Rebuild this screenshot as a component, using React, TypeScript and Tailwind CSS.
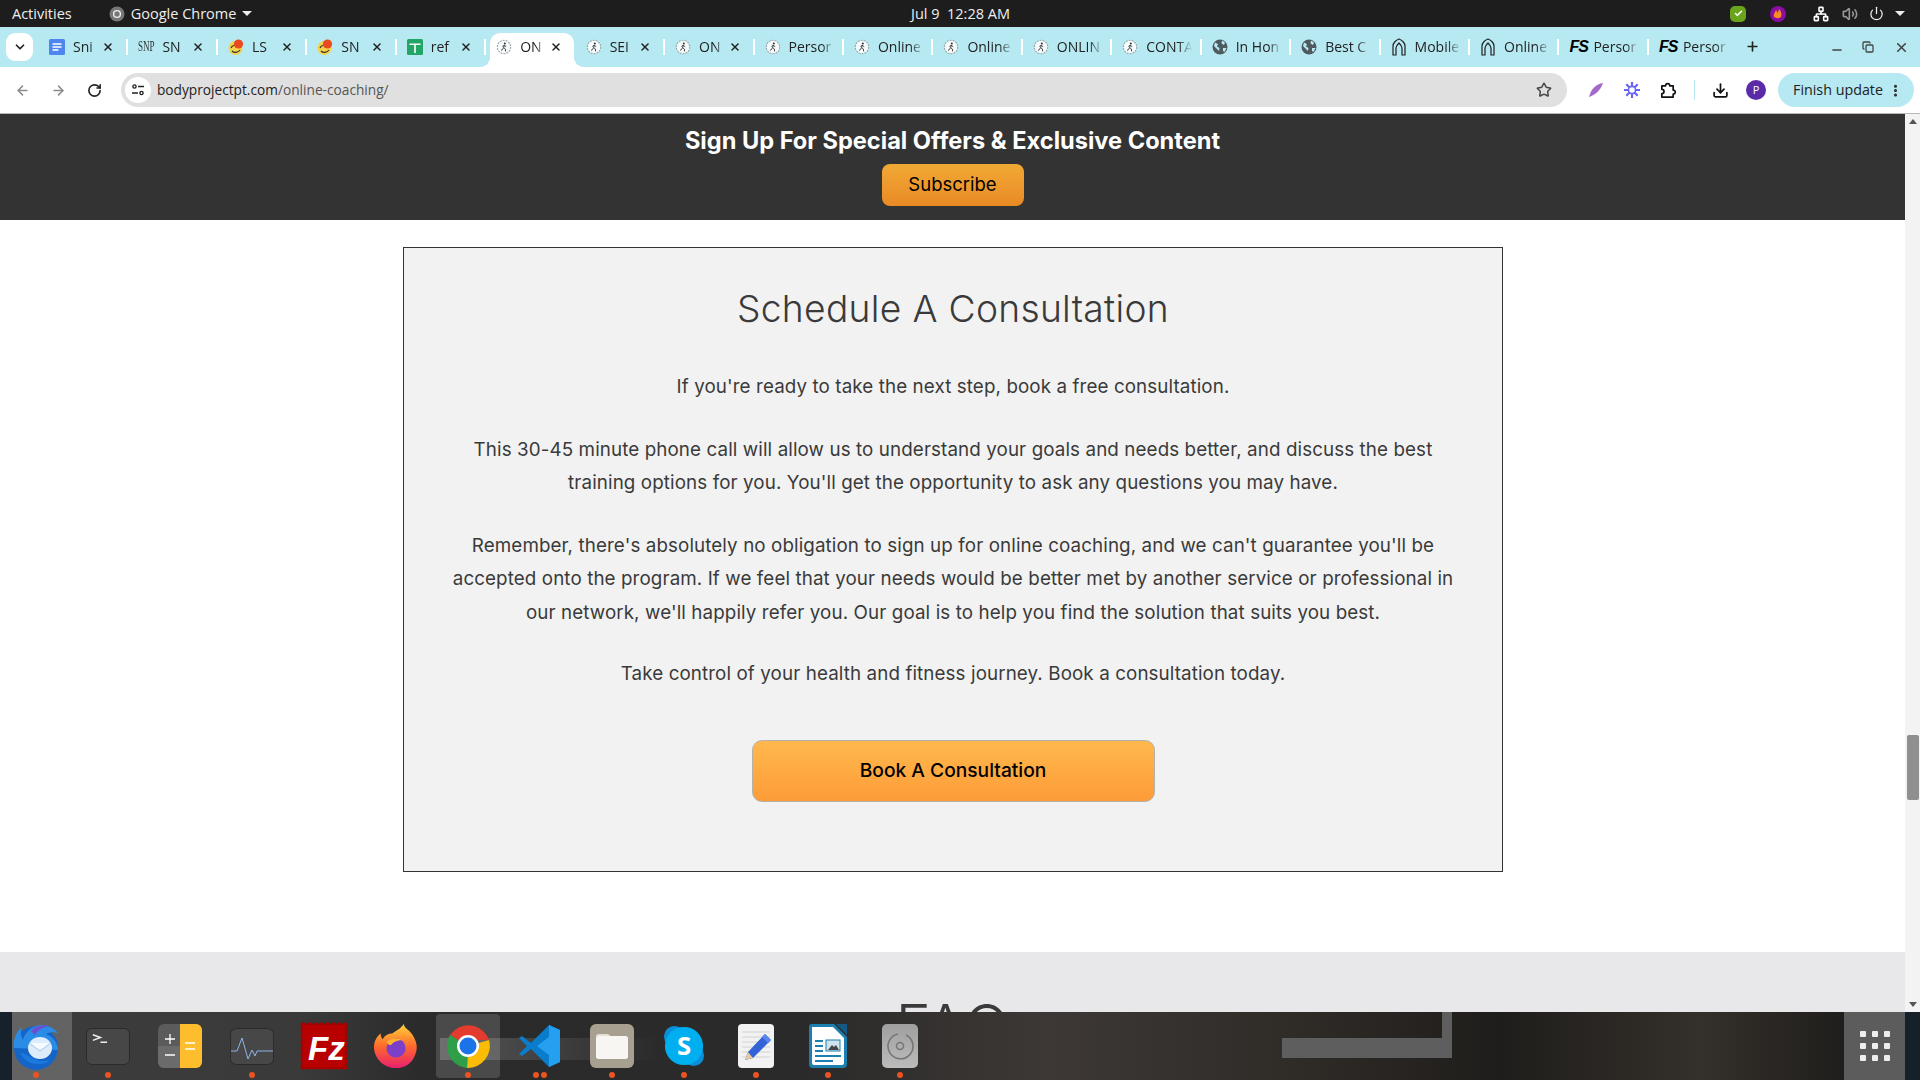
import { ChevronDown, X, Plus, Minus, ArrowLeft, ArrowRight, RotateCw, Star, Download, EllipsisVertical, Power, Copy, Check, Network, Volume2 } from "lucide-react";

type TabKind = "doc" | "snp" | "chat" | "sheet" | "runner" | "globe" | "arch" | "fs";

interface TabItem {
  kind: TabKind;
  title: string;
  close?: boolean;
  active?: boolean;
}

const tabs: TabItem[] = [
  { kind: "doc", title: "Sni", close: true },
  { kind: "snp", title: "SN", close: true },
  { kind: "chat", title: "LS", close: true },
  { kind: "chat", title: "SN", close: true },
  { kind: "sheet", title: "ref", close: true },
  { kind: "runner", title: "ON", close: true, active: true },
  { kind: "runner", title: "SEI", close: true },
  { kind: "runner", title: "ON", close: true },
  { kind: "runner", title: "Persor" },
  { kind: "runner", title: "Online" },
  { kind: "runner", title: "Online" },
  { kind: "runner", title: "ONLIN" },
  { kind: "runner", title: "CONTA" },
  { kind: "globe", title: "In Hon" },
  { kind: "globe", title: "Best C" },
  { kind: "arch", title: "Mobile" },
  { kind: "arch", title: "Online" },
  { kind: "fs", title: "Persor" },
  { kind: "fs", title: "Persor" },
];

function TabIcon({ kind }: { kind: TabKind }) {
  if (kind === "doc") {
    return (
      <svg viewBox="0 0 16 16" className="w-4 h-4 shrink-0">
        <rect width="16" height="16" rx="1.5" fill="#4d86ee" />
        <path d="M3.5 5h9M3.5 8h9M3.5 11h6" stroke="#fff" strokeWidth="1.5" />
      </svg>
    );
  }
  if (kind === "snp") {
    return (
      <div className="w-4 h-4 shrink-0 overflow-visible font-['Liberation_Serif',serif] text-[15px] leading-[14px] text-[#333] scale-x-[0.6] origin-left whitespace-nowrap">
        SNP
      </div>
    );
  }
  if (kind === "chat") {
    return (
      <svg viewBox="0 0 16 16" className="w-4 h-4 shrink-0">
        <circle cx="7.5" cy="9" r="7" fill="#f4d24a" />
        <path d="M3 9c1-3 6-4 8-1M4 12c2 2 6 2 8-1" stroke="#333" strokeWidth="1.2" fill="none" />
        <circle cx="10.5" cy="5" r="4.6" fill="#ea4a1f" />
      </svg>
    );
  }
  if (kind === "sheet") {
    return (
      <svg viewBox="0 0 16 16" className="w-4 h-4 shrink-0">
        <rect width="16" height="16" rx="1.5" fill="#23a566" />
        <path d="M2.5 5.2h11M8 5.2V14" stroke="#fff" strokeWidth="1.6" />
      </svg>
    );
  }
  if (kind === "runner") {
    return (
      <svg viewBox="0 0 16 16" className="w-4 h-4 shrink-0">
        <circle cx="8" cy="8" r="6.7" fill="#f6fbfc" stroke="#9aa5a8" strokeWidth="1.1" strokeDasharray="2 1" />
        <circle cx="8.8" cy="4.6" r="1" fill="#333" />
        <path d="M8.4 6 7.6 8.6l1.8 1.4.2 2.4M7.6 8.6 6.4 10.6 5 11.4M8.2 6.4l2 1.2M8.2 6.4 6.4 7.4" stroke="#333" strokeWidth="0.9" fill="none" />
      </svg>
    );
  }
  if (kind === "globe") {
    return (
      <svg viewBox="0 0 16 16" className="w-4 h-4 shrink-0">
        <circle cx="8" cy="8" r="7.5" fill="#4e5a5e" />
        <path d="M3 3.5 6 5 5 7.5 7.5 9 7 12 5 10 2 7zM10 1.5l3 2-1 2.5-2.5-1.5zM11 9h3.5l-2 4-1.5-1z" fill="#b6e9f2" />
      </svg>
    );
  }
  if (kind === "arch") {
    return (
      <svg viewBox="0 0 16 18" className="w-4 h-[18px] shrink-0" fill="none" stroke="#222" strokeWidth="1.2">
        <path d="M2 17V8C2 5 5 2 8 1c3 1 6 4 6 7v9h-3v-7C11 8 9 6 8 5 7 6 5 8 5 10v7z" />
      </svg>
    );
  }
  return (
    <span className="w-4 shrink-0 font-['Liberation_Sans',sans-serif] font-black italic text-[16px] leading-4 text-black tracking-[-1px]">
      FS
    </span>
  );
}

function Tab({ tab, last }: { tab: TabItem; last: boolean }) {
  return (
    <div className="relative w-[89.45px] h-[34px] shrink-0">
      {tab.active && (
        <>
          <div className="absolute left-[4px] right-[2px] top-0 bottom-0 bg-white rounded-t-[10px]" />
          <div className="absolute left-[-6px] bottom-0 w-[10px] h-[10px] bg-[radial-gradient(circle_at_0_0,transparent_10px,white_10px)]" />
          <div className="absolute right-[-8px] bottom-0 w-[10px] h-[10px] bg-[radial-gradient(circle_at_100%_0,transparent_10px,white_10px)]" />
        </>
      )}
      <div className="relative h-full flex items-center pl-[10px] pr-2 pb-[7px]">
        <TabIcon kind={tab.kind} />
        <span
          className={`ml-[8px] text-[14px] text-[#222] whitespace-nowrap overflow-hidden [mask-image:linear-gradient(to_right,black_70%,transparent)] ${
            tab.close ? "w-[24px]" : "w-[46px]"
          }`}
        >
          {tab.title}
        </span>
        {tab.close && <X className="absolute right-[14px] top-[8px] w-3 h-3 text-[#222]" strokeWidth={3} />}
      </div>
      {!tab.active && !last && <div className="absolute right-0 top-[6px] h-[16px] w-[2px] bg-white" />}
    </div>
  );
}

function Dot({ n = 1 }: { n?: number }) {
  return (
    <div className="absolute bottom-[2px] left-0 right-0 flex justify-center gap-[2px]">
      {Array.from({ length: n }).map((_, i) => (
        <span key={i} className="w-[6px] h-[6px] rounded-full bg-[#e95420]" />
      ))}
    </div>
  );
}

function DockItem({ children, dots = 0, active }: { children: React.ReactNode; dots?: number; active?: boolean }) {
  return (
    <div className="relative w-[72px] h-[68px] shrink-0 flex items-center justify-center">
      {active && <div className="absolute inset-x-[4px] top-[2px] bottom-[2px] rounded-[4px] bg-white/15" />}
      <div className="relative">{children}</div>
      {dots > 0 && <Dot n={dots} />}
    </div>
  );
}

function Thunderbird() {
  return (
    <svg viewBox="0 0 48 48" className="w-[48px] h-[48px]">
      <circle cx="24" cy="26" r="22" fill="#1565c8" />
      <path d="M2 26C1 18 4 10 10 5c-2 5-1 9 1 13 2-8 9-14 18-15 7 0 13 3 17 8-4-1-9-1-12 1 7 3 12 9 12 16z" fill="#2b8ce8" />
      <path d="M19 9c4-5 11-7 18-5-6 1-11 4-14 9z" fill="#6a4fd0" />
      <ellipse cx="28" cy="26" rx="12" ry="11" fill="#dcecfb" />
      <path d="M17 21l11 8 11-8" fill="#f5fafe" stroke="#9fc6ef" strokeWidth="1" />
      <path d="M8 30c3 8 10 12 18 12 5 0 9-1 12-4-7 2-15 1-21-4z" fill="#1b7ade" />
    </svg>
  );
}

function Terminal() {
  return (
    <div className="w-[44px] h-[37px] rounded-[6px] bg-[#474747] border border-[#2a2a2a] relative">
      <svg viewBox="0 0 44 37" className="w-full h-full">
        <path d="M6 6l8 3-8 3M14 14h7" stroke="#eee" strokeWidth="1.6" fill="none" />
      </svg>
    </div>
  );
}

function Calculator() {
  return (
    <svg viewBox="0 0 44 44" className="w-[44px] h-[44px]">
      <rect width="44" height="44" rx="6" fill="#5b5b5b" />
      <path d="M22 0h16a6 6 0 0 1 6 6v32a6 6 0 0 1-6 6H22z" fill="#fdbd2c" />
      <path d="M0 22h22v22H6a6 6 0 0 1-6-6z" fill="#6b6b6b" />
      <path d="M7 15h10M12 10v10M7 31h10M27 19h10M27 25h10" stroke="#fff" strokeWidth="1.3" />
    </svg>
  );
}

function Monitor() {
  return (
    <svg viewBox="0 0 44 37" className="w-[44px] h-[37px]">
      <rect x="0.5" y="0.5" width="43" height="36" rx="6" fill="#474747" stroke="#2a2a2a" />
      <path d="M1 23h6l5-13 6 21 4-9 3 6 2-5h16" fill="none" stroke="#8eb4ea" strokeWidth="1" />
    </svg>
  );
}

function FileZilla() {
  return (
    <svg viewBox="0 0 48 48" className="w-[48px] h-[48px]">
      <rect x="3" y="3" width="42" height="42" fill="#bf0000" stroke="#a80000" strokeWidth="5" strokeLinecap="round" strokeDasharray="1 5" />
      <rect x="3" y="3" width="42" height="42" fill="#b80000" />
      <text x="8" y="38" fontFamily="'Liberation Sans', sans-serif" fontWeight="700" fontStyle="italic" fontSize="33" fill="#fff">
        Fz
      </text>
    </svg>
  );
}

function Firefox() {
  return (
    <svg viewBox="0 0 48 48" className="w-[46px] h-[48px]">
      <defs>
        <linearGradient id="ffg" x1="0" y1="0" x2="0" y2="1">
          <stop offset="0" stopColor="#ffd43a" />
          <stop offset="0.5" stopColor="#ff6a2b" />
          <stop offset="1" stopColor="#e8206f" />
        </linearGradient>
      </defs>
      <path d="M32 1c1 5 6 6 9 11 5 8 6 14 3 21-3 9-11 14-20 14C12 47 2 38 1 26 1 20 3 15 8 11c0 3 1 5 2 6 2-4 6-6 10-6 4-3 9-5 12-10z" fill="url(#ffg)" />
      <circle cx="24" cy="26" r="10" fill="#7b3fc8" />
      <path d="M14 20c4-5 12-5 17-2-6 0-10 2-12 5-2 0-4-1-5-3z" fill="#ffb02e" />
    </svg>
  );
}

function Chrome() {
  return (
    <svg viewBox="0 0 48 48" className="w-[48px] h-[48px]">
      <path d="M24 24 6 13A22 22 0 0 1 45 18H24z" fill="#e33b2e" />
      <path d="M24 24 45 18A22 22 0 0 1 23 46z" fill="#fbbc05" />
      <path d="M24 24 23 46A22 22 0 0 1 6 13z" fill="#2f9e48" />
      <circle cx="24" cy="24" r="11" fill="#fff" />
      <circle cx="24" cy="24" r="8.5" fill="#1a73e8" />
    </svg>
  );
}

function VSCode() {
  return (
    <svg viewBox="0 0 44 44" className="w-[44px] h-[44px]">
      <path d="M31 1 13 19 4 12 1 14l8 8-8 8 3 2 9-7 18 18 11-5V6z" fill="#0a7ccc" />
      <path d="M31 1l11 5v32l-11 5V31L19 22l12-9z" fill="#25a0f0" />
    </svg>
  );
}

function Files() {
  return (
    <div className="w-[44px] h-[44px] rounded-[6px] bg-[#a79f8f] flex items-center justify-center">
      <svg viewBox="0 0 32 26" className="w-[32px] h-[26px]">
        <path d="M0 4a3 3 0 0 1 3-3h9l4 3z" fill="#e4e0d8" />
        <rect y="3" width="32" height="23" rx="2.5" fill="#f7f6f3" />
      </svg>
    </div>
  );
}

function Skype() {
  return (
    <svg viewBox="0 0 44 44" className="w-[42px] h-[42px]">
      <circle cx="12" cy="12" r="11" fill="#0b8fd8" />
      <circle cx="32" cy="32" r="11" fill="#0b8fd8" />
      <circle cx="22" cy="22" r="20" fill="#00aff0" />
      <text x="22" y="31" textAnchor="middle" fontFamily="'Open Sans', sans-serif" fontWeight="700" fontSize="27" fill="#fff">
        S
      </text>
    </svg>
  );
}

function TextEditor() {
  return (
    <svg viewBox="0 0 36 44" className="w-[36px] h-[44px]">
      <rect width="36" height="44" rx="4" fill="#f2f2f2" />
      <path d="M4 8h28M4 13h28M4 18h28M4 23h28M4 28h28M4 33h28" stroke="#d2d2d2" strokeWidth="1" />
      <path d="M27 10l6 6-18 18-8 2 3-8z" fill="#3463d8" />
      <path d="M27 10l6 6-3 3-6-6z" fill="#5a86ee" />
      <path d="M10 28l5 6-8 2z" fill="#e4c9a0" />
    </svg>
  );
}

function Writer() {
  return (
    <svg viewBox="0 0 38 44" className="w-[38px] h-[44px]">
      <path d="M3 0h22l13 13v27a4 4 0 0 1-4 4H4a4 4 0 0 1-4-4V3a3 3 0 0 1 3-3z" fill="#1b7fb0" />
      <path d="M3 3h21l11 11v25a2 2 0 0 1-2 2H5a2 2 0 0 1-2-2z" fill="#fff" />
      <path d="M27 0h11v11z" fill="#155a85" />
      <path d="M6 16h8v2H6zM6 21h8v2H6zM6 26h8v2H6zM6 31h26v2H6zM6 36h18v2H6z" fill="#1b7fb0" />
      <rect x="17" y="16" width="14" height="11" fill="#cfe3ef" stroke="#1b7fb0" />
      <path d="M19 26l4-5 2 2 2-2 3 5z" fill="#444" />
    </svg>
  );
}

function Disc() {
  return (
    <div className="w-[36px] h-[44px] rounded-[5px] bg-gradient-to-b from-[#9f9f9f] to-[#bcbcbc] flex items-center justify-center">
      <svg viewBox="0 0 28 28" className="w-[28px] h-[28px]" fill="none" stroke="#777" strokeWidth="1.6">
        <path d="M20 3a12.5 12.5 0 1 1-8-1" />
        <circle cx="14" cy="14" r="3.5" />
      </svg>
    </div>
  );
}

function TopBar() {
  return (
    <div className="h-[27px] shrink-0 bg-[#1d1d1d] text-[#eee] text-[14.5px] flex items-center relative">
      <span className="ml-3">Activities</span>
      <div className="ml-[37px] flex items-center gap-[6px]">
        <svg viewBox="0 0 16 16" className="w-4 h-4">
          <circle cx="8" cy="8" r="7.5" fill="#777" />
          <circle cx="8" cy="8" r="3.4" fill="none" stroke="#eee" strokeWidth="1.4" />
        </svg>
        <span>Google Chrome</span>
        <span className="w-0 h-0 border-x-[5px] border-x-transparent border-t-[5px] border-t-[#eee]" />
      </div>
      <div className="flex-1" />
      {/* clock sits centred over the bar */}
      <span className="absolute left-[911px] top-[3px]">Jul 9&nbsp; 12:28 AM</span>
      <div className="w-[16px] h-[16px] rounded-[5px] bg-[#6aa31c] flex items-center justify-center mr-[24px]">
        <Check className="w-[9px] h-[9px] text-white" strokeWidth={4} />
      </div>
      <svg viewBox="0 0 16 16" className="w-4 h-4 mr-[27px]">
        <circle cx="8" cy="8" r="8" fill="#8a0ea0" />
        <path d="M4 11c-1-3 1-4 2-7 1 1 1 2 1 3 1-1 2-3 2-4 2 2 3 5 2 8-1 1-5 2-7 0z" fill="#fb8b24" />
      </svg>
      <Network className="w-4 h-4 text-white mr-[13px]" strokeWidth={2.4} />
      <Volume2 className="w-4 h-4 text-[#999] mr-[11px]" strokeWidth={2.4} />
      <Power className="w-[15px] h-[15px] text-[#eee] mr-[11px]" />
      <span className="w-0 h-0 border-x-[5px] border-x-transparent border-t-[5px] border-t-[#eee] mr-[15px]" />
    </div>
  );
}

function TabStrip() {
  return (
    <div className="h-[40px] shrink-0 bg-[#b6e9f2] flex items-end pl-[6px]">
      <div className="w-[27px] h-[28px] shrink-0 rounded-[9px] bg-white flex items-center justify-center self-end mb-[6px] mr-[6px]">
        <ChevronDown className="w-[14px] h-[14px] text-[#222]" strokeWidth={3} />
      </div>
      {tabs.map((tab, i) => (
        <Tab key={i} tab={tab} last={i === tabs.length - 1} />
      ))}
      <Plus className="w-[15px] h-[15px] ml-[7px] mb-[13px] text-[#222]" strokeWidth={2.6} />
      <div className="flex-1" />
      <Minus className="w-[14px] h-[14px] mb-[10px] mr-[18px] text-[#444]" strokeWidth={2.6} />
      <Copy className="w-[12px] h-[12px] mb-[14px] mr-[20px] text-[#444]" strokeWidth={2.6} />
      <X className="w-[15px] h-[15px] mb-[12px] mr-[11px] text-[#444]" strokeWidth={2.6} />
    </div>
  );
}

function Toolbar() {
  return (
    <div className="h-[47px] shrink-0 bg-white border-b border-[#b9b9b9] flex items-center rounded-tl-[10px] rounded-tr-[10px] pl-[15px]">
      <ArrowLeft className="w-[15px] h-[15px] text-[#8a8a8a] shrink-0" strokeWidth={2.4} />
      <ArrowRight className="w-[15px] h-[15px] ml-[21px] text-[#8a8a8a] shrink-0" strokeWidth={2.4} />
      <RotateCw className="w-[15px] h-[15px] ml-[21px] text-[#222] shrink-0" strokeWidth={2.6} />
      <div className="ml-[19px] w-[1446px] h-[34px] shrink-0 rounded-full bg-[#e0e0e0] flex items-center pl-[4px]">
        <div className="w-[26px] h-[26px] rounded-full bg-white flex items-center justify-center">
          <svg viewBox="0 0 14 14" className="w-[14px] h-[14px]" fill="none" stroke="#222" strokeWidth="1.4">
            <circle cx="3.5" cy="3.5" r="1.6" />
            <path d="M7 3.5h6M1 10h6" />
            <circle cx="10.5" cy="10" r="1.6" />
          </svg>
        </div>
        <span className="ml-[6px] text-[13.7px] text-[#222]">
          bodyprojectpt.com<span className="text-[#555]">/online-coaching/</span>
        </span>
        <div className="flex-1" />
        <Star className="w-[16px] h-[16px] text-[#444] mr-[15px]" strokeWidth={2.2} />
      </div>
      <svg viewBox="0 0 16 16" className="w-4 h-4 ml-[21px] shrink-0">
        <path d="M15 1C8 2 3 7 1 15 6 13 12 10 15 1z" fill="#a468c8" />
      </svg>
      <svg viewBox="0 0 18 18" className="w-[18px] h-[18px] ml-[19px] shrink-0" stroke="#6a63f6" strokeWidth="2.2">
        <path d="M9 1v16M1 9h16M3.3 3.3l11.4 11.4M14.7 3.3 3.3 14.7" />
        <circle cx="9" cy="9" r="3.6" fill="#fff" strokeWidth="1.6" />
      </svg>
      <svg viewBox="0 0 18 18" className="w-[17px] h-[17px] ml-[18px] shrink-0" fill="none" stroke="#111" strokeWidth="1.8" strokeLinejoin="round">
        <path d="M3 4h4a2.2 2.2 0 0 1 4.4 0H15v4.5a2.2 2.2 0 0 1 0 4.4V16H3v-3.6a2.3 2.3 0 0 0 0-4.6z" />
      </svg>
      <div className="w-px h-[20px] ml-[18px] bg-[#b6e9f2] shrink-0" />
      <Download className="w-[17px] h-[17px] ml-[17px] text-[#111] shrink-0" strokeWidth={2.4} />
      <div className="w-[20px] h-[20px] ml-[17px] rounded-full bg-[#5b2aa8] text-white text-[11px] flex items-center justify-center shrink-0">
        P
      </div>
      <div className="ml-[12px] w-[136px] h-[34px] shrink-0 rounded-full bg-[#b6e9f2] flex items-center pl-[15px] text-[14.3px] text-[#222]">
        Finish update
        <EllipsisVertical className="w-[15px] h-[15px] ml-[5px] text-[#222]" strokeWidth={2.8} />
      </div>
    </div>
  );
}

function Page() {
  return (
    <div className="flex-1 min-h-0 flex overflow-hidden">
      <div className="flex-1 min-w-0 overflow-hidden font-['Inter',sans-serif] text-[#3a3a3a]">
        <section className="h-[106px] bg-[#333333] flex flex-col items-center pt-[12px]">
          <h2 className="text-[23.6px] leading-[30px] font-bold text-white">Sign Up For Special Offers &amp; Exclusive Content</h2>
          <button className="mt-[8px] w-[142px] h-[42px] rounded-[8px] bg-gradient-to-b from-[#f0a935] to-[#e98a25] text-[18.5px] text-black">
            Subscribe
          </button>
        </section>

        <section className="h-[732px] pt-[27px] pl-px flex justify-center bg-white">
          <div className="w-[1100px] h-[625px] border border-[#333] bg-[#f2f2f2] flex flex-col items-center pt-[37px]">
            <h2 className="text-[37.2px] leading-[48px] font-light tracking-[0.3px]">Schedule A Consultation</h2>
            <div className="mt-[37px] w-[1015px] text-center text-[18.8px] leading-[33.5px] tracking-[0.1px]">
              <p>If you're ready to take the next step, book a free consultation.</p>
              <p className="mt-[29px]">
                This 30-45 minute phone call will allow us to understand your goals and needs better, and discuss the best training options for you. You'll get the opportunity to ask any questions you may have.
              </p>
              <p className="mt-[29px]">
                Remember, there's absolutely no obligation to sign up for online coaching, and we can't guarantee you'll be accepted onto the program. If we feel that your needs would be better met by another service or professional in our network, we'll happily refer you. Our goal is to help you find the solution that suits you best.
              </p>
              <p className="mt-[28px]">Take control of your health and fitness journey. Book a consultation today.</p>
            </div>
            <button className="mt-[49px] w-[403px] h-[62px] rounded-[10px] border border-[#b5b0a8] bg-gradient-to-b from-[#ffb84d] to-[#fd9c38] text-[19.2px] font-medium text-black">
              Book A Consultation
            </button>
          </div>
        </section>

        <section className="h-[100px] bg-[#e8e8ea] flex justify-center pt-[44px]">
          <h2 className="text-[60px] leading-[60px] font-light">FAQ</h2>
        </section>
      </div>

      {/* scrollbar */}
      <div className="w-[15px] shrink-0 bg-[#f3f3f3] flex flex-col items-center">
        <span className="mt-[5px] w-0 h-0 border-x-[4px] border-x-transparent border-b-[5px] border-b-[#555]" />
        <div className="mt-[611px] w-[12px] h-[65px] rounded-[2px] bg-[#8f8f8f]" />
        <div className="flex-1" />
        <span className="mb-[5px] w-0 h-0 border-x-[4px] border-x-transparent border-t-[5px] border-t-[#555]" />
      </div>
    </div>
  );
}

function Dock() {
  return (
    <div className="relative h-[68px] shrink-0 flex overflow-hidden bg-[linear-gradient(90deg,#16212c_0,#16212c_12px,#3c3c3c_12px,#3a3a3a_300px,#2b2b2b_420px,#2a2a2a_800px,#3d3835_1050px,#2f2b27_1300px,#1f1d1b_1500px,#34302b_1700px,#201e1c_1844px)]">
      {/* blurred wallpaper behind the translucent dock */}
      <div className="absolute left-[1282px] top-0 w-[170px] h-[46px] border-r-[10px] border-b-[20px] border-[#5e5e5e]" />
      <div className="absolute left-[440px] top-[26px] w-[220px] h-[22px] bg-gradient-to-r from-white/20 to-transparent" />
      <div className="relative flex">
        <div className="relative">
          <div className="absolute left-[12px] top-0 bottom-0 w-[60px] bg-white/20" />
          <DockItem dots={1}>
            <Thunderbird />
          </DockItem>
        </div>
        <DockItem dots={1}>
          <Terminal />
        </DockItem>
        <DockItem>
          <Calculator />
        </DockItem>
        <DockItem dots={1}>
          <Monitor />
        </DockItem>
        <DockItem>
          <FileZilla />
        </DockItem>
        <DockItem>
          <Firefox />
        </DockItem>
        <DockItem dots={1} active>
          <Chrome />
        </DockItem>
        <DockItem dots={2}>
          <VSCode />
        </DockItem>
        <DockItem dots={1}>
          <Files />
        </DockItem>
        <DockItem dots={1}>
          <Skype />
        </DockItem>
        <DockItem dots={1}>
          <TextEditor />
        </DockItem>
        <DockItem dots={1}>
          <Writer />
        </DockItem>
        <DockItem dots={1}>
          <Disc />
        </DockItem>
      </div>
      <div className="flex-1" />
      <div className="relative w-[61px] shrink-0 bg-[#5c5c5c] flex items-center justify-center">
        <div className="grid grid-cols-3 gap-x-[6px] gap-y-[6px]">
          {Array.from({ length: 9 }).map((_, i) => (
            <span key={i} className="w-[6px] h-[6px] rounded-[1px] bg-[#eee]" />
          ))}
        </div>
      </div>
      <div className="relative w-[15px] shrink-0 bg-[#15202b]" />
    </div>
  );
}

export default function App() {
  return (
    <div className="w-[1920px] h-[1080px] flex flex-col overflow-hidden font-['Open_Sans',sans-serif]">
      <TopBar />
      <TabStrip />
      <Toolbar />
      <Page />
      <Dock />
    </div>
  );
}
